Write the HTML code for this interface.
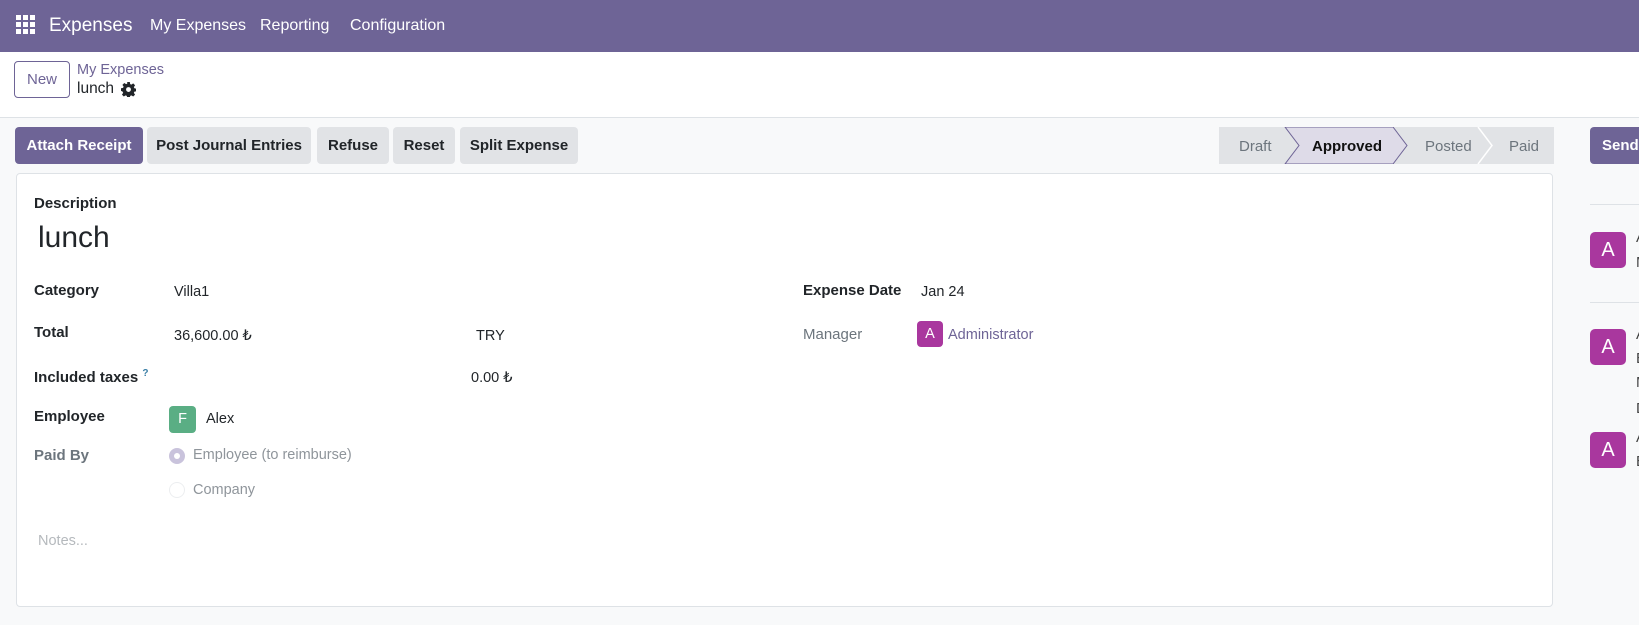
<!DOCTYPE html>
<html><head><meta charset="utf-8"><style>
*{box-sizing:border-box;margin:0;padding:0}
body{width:1639px;height:625px;overflow:hidden;background:#f8f9fa;font-family:"Liberation Sans",sans-serif;font-size:14.5px;color:#212529;position:relative}
.nav{position:absolute;left:0;top:0;width:1639px;height:52px;background:#6e6496;color:#fff}
.nav span{position:absolute;top:17px;font-size:16px}
.ctrl{position:absolute;left:0;top:52px;width:1639px;height:66px;background:#fff;border-bottom:1px solid #dee2e6}
.a{position:absolute}
.btn{position:absolute;top:127px;height:37px;border-radius:4px;background:#e1e3e6;font-weight:bold;font-size:15px;line-height:37px;text-align:center;color:#212529}
.card{position:absolute;left:16px;top:173px;width:1537px;height:434px;background:#fff;border:1px solid #dee2e6;border-radius:4px}
.lb{position:absolute;font-weight:bold;font-size:15px}
.av{position:absolute;width:36px;height:36px;border-radius:5px;background:#a9379e;color:#fff;font-size:20px;text-align:center;line-height:36px}
.ct{position:absolute;left:1636px;font-size:15px;color:#444}
</style></head><body>
<div class="nav">
<svg class="a" style="left:16px;top:15px" width="19" height="19" viewBox="0 0 19 19" fill="#fff"><rect x="0" y="0" width="5" height="5"/><rect x="7" y="0" width="5" height="5"/><rect x="14" y="0" width="5" height="5"/><rect x="0" y="7" width="5" height="5"/><rect x="7" y="7" width="5" height="5"/><rect x="14" y="7" width="5" height="5"/><rect x="0" y="14" width="5" height="5"/><rect x="7" y="14" width="5" height="5"/><rect x="14" y="14" width="5" height="5"/></svg>
<span style="left:49px;font-size:19px;top:15px">Expenses</span>
<span style="left:150px">My Expenses</span>
<span style="left:260px">Reporting</span>
<span style="left:350px">Configuration</span>
</div>
<div class="ctrl"></div>
<div class="a" style="left:14px;top:61px;width:56px;height:37px;border:1px solid #6e6496;border-radius:4px;background:#fff;color:#6e6496;font-size:15px;line-height:35px;text-align:center">New</div>
<div class="a" style="left:77px;top:62px;color:#6e6496;font-size:14.5px">My Expenses</div>
<div class="a" style="left:77px;top:80px;font-size:15.5px">lunch</div>
<svg class="a" style="left:121px;top:82px" width="15" height="15" viewBox="0 0 16 16"><path fill="#212529" d="M6.6 0h2.8l.4 2.2 1.3.6 1.9-1.3 2 2-1.3 1.9.6 1.3 2.2.4v2.8l-2.2.4-.6 1.3 1.3 1.9-2 2-1.9-1.3-1.3.6-.4 2.2H6.6l-.4-2.2-1.3-.6-1.9 1.3-2-2 1.3-1.9-.6-1.3L0 9.4V6.6l2.2-.4.6-1.3-1.3-1.9 2-2 1.9 1.3 1.3-.6z"/><circle cx="8" cy="8" r="2.6" fill="#fff"/></svg>
<div class="btn" style="left:15px;width:128px;background:#6e6496;color:#fff">Attach Receipt</div>
<div class="btn" style="left:147px;width:164px">Post Journal Entries</div>
<div class="btn" style="left:317px;width:72px">Refuse</div>
<div class="btn" style="left:393px;width:62px">Reset</div>
<div class="btn" style="left:460px;width:118px">Split Expense</div>
<svg class="a" style="left:1219px;top:127px" width="335" height="37">
<rect x="0" y="0" width="335" height="37" fill="#e1e3e6"/>
<polygon points="66,0 174,0 188,18.5 174,37 66,37 80,18.5" fill="#dedbe8" stroke="#6e6496" stroke-width="1"/>
<polyline points="259,0 273,18.5 259,37" fill="none" stroke="#fff" stroke-width="1.5"/>
<text x="20" y="24" font-family="Liberation Sans" font-size="15" fill="#6c757d">Draft</text>
<text x="93" y="24" font-family="Liberation Sans" font-size="15" font-weight="bold" fill="#111">Approved</text>
<text x="206" y="24" font-family="Liberation Sans" font-size="15" fill="#6c757d">Posted</text>
<text x="290" y="24" font-family="Liberation Sans" font-size="15" fill="#6c757d">Paid</text>
</svg>
<div class="btn" style="left:1590px;width:60px;background:#6e6496;color:#fff;text-align:left;padding-left:12px">Send</div>
<div class="card"></div>
<div class="lb" style="left:34px;top:195px">Description</div>
<div class="a" style="left:38px;top:221px;font-size:30px">lunch</div>
<div class="lb" style="left:34px;top:282px">Category</div><div class="a" style="left:174px;top:284px">Villa1</div>
<div class="lb" style="left:34px;top:324px">Total</div><div class="a" style="left:174px;top:328px">36,600.00 ₺</div><div class="a" style="left:476px;top:328px">TRY</div>
<div class="lb" style="left:34px;top:368px">Included taxes <sup style="color:#3a7fa6;font-size:10px">?</sup></div><div class="a" style="left:471px;top:370px">0.00 ₺</div>
<div class="lb" style="left:34px;top:408px">Employee</div>
<div class="a" style="left:169px;top:406px;width:27px;height:27px;border-radius:4px;background:#5aae84;color:#fff;text-align:center;line-height:27px">F</div>
<div class="a" style="left:206px;top:411px">Alex</div>
<div class="lb" style="left:34px;top:447px;color:#6c757d">Paid By</div>
<div class="a" style="left:169px;top:448px;width:16px;height:16px;border-radius:50%;background:#c9c3dc;border:4px solid #c9c3dc"><div style="width:6px;height:6px;margin:1px;border-radius:50%;background:#fff"></div></div>
<div class="a" style="left:193px;top:447px;color:#8f959b">Employee (to reimburse)</div>
<div class="a" style="left:169px;top:482px;width:16px;height:16px;border-radius:50%;border:1px solid #eceef0"></div>
<div class="a" style="left:193px;top:482px;color:#8f959b">Company</div>
<div class="a" style="left:38px;top:533px;color:#b5b9bd">Notes...</div>
<div class="lb" style="left:803px;top:282px">Expense Date</div><div class="a" style="left:921px;top:284px">Jan 24</div>
<div class="a" style="left:803px;top:326px;color:#6c757d;font-size:15px">Manager</div>
<div class="a" style="left:917px;top:321px;width:26px;height:26px;border-radius:4px;background:#a9379e;color:#fff;text-align:center;line-height:26px">A</div>
<div class="a" style="left:948px;top:327px;color:#6e6496">Administrator</div>
<div class="a" style="left:1590px;top:204px;width:60px;height:1px;background:#dee2e6"></div>
<div class="a" style="left:1590px;top:302px;width:60px;height:1px;background:#dee2e6"></div>
<div class="av" style="left:1590px;top:232px">A</div>
<div class="av" style="left:1590px;top:329px">A</div>
<div class="av" style="left:1590px;top:432px">A</div>
<div class="ct" style="top:229px">A</div><div class="ct" style="top:254px">M</div>
<div class="ct" style="top:326px">A</div><div class="ct" style="top:350px">E</div><div class="ct" style="top:374px">M</div><div class="ct" style="top:400px">D</div>
<div class="ct" style="top:429px">A</div><div class="ct" style="top:453px">E</div>
</body></html>
